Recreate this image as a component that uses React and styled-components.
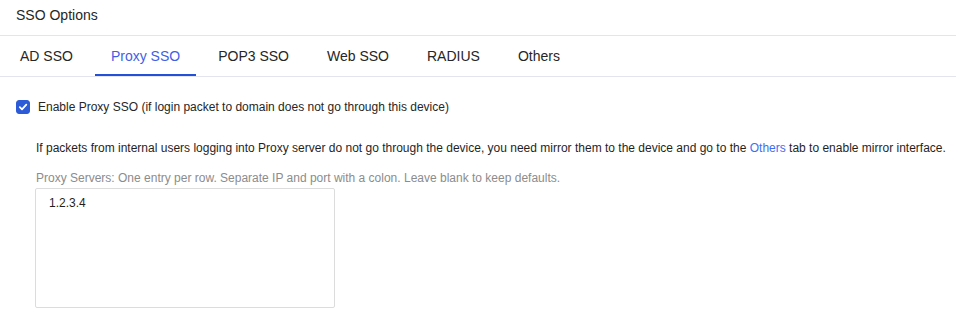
import React, { useState } from "react";
import styled, { createGlobalStyle } from "styled-components";

const GlobalStyle = createGlobalStyle`
    html, body {
        margin: 0;
        padding: 0;
        background: #ffffff;
    }
    body {
        font-family: "Liberation Sans", Arial, sans-serif;
        color: #262626;
    }
`

const Page = styled.div`
    width: 956px;
    height: 318px;
    overflow: hidden;
    background: #fff;
`
const Header = styled.div`
    box-sizing: border-box;
    height: 36px;
    padding: 6px 16px 0;
    font-size: 14px;
    line-height: 18px;
    color: #262626;
    border-bottom: 1px solid #e4e4ee;
`
const TabBar = styled.div`
    display: flex;
    gap: 6px;
    box-sizing: border-box;
    height: 41px;
    padding-left: 4px;
    border-bottom: 1px solid #e4e4ee;
`
const Tab = styled.div`
    position: relative;
    padding: 0 16px;
    font-size: 14px;
    line-height: 40px;
    color: ${props => (props.$active ? "#3f5fe6" : "#262626")};
    cursor: pointer;

    &::after {
        content: "";
        position: absolute;
        left: 0;
        right: 0;
        bottom: 0;
        height: 2px;
        background: ${props => (props.$active ? "#2450d8" : "transparent")};
    }
`
const Content = styled.div`
    padding: 21px 16px 0;
    font-size: 12px;
`
const CheckRow = styled.label`
    display: flex;
    align-items: center;
    gap: 8px;
    height: 18px;
    line-height: 18px;
    cursor: pointer;
`
const Box = styled.span`
    display: flex;
    align-items: center;
    justify-content: center;
    width: 14px;
    height: 14px;
    border-radius: 3px;
    background: ${props => (props.$checked ? "#2d5bd8" : "#fff")};
    border: 1px solid ${props => (props.$checked ? "#2d5bd8" : "#bfbfbf")};
    box-sizing: border-box;
`
const Indent = styled.div`
    padding-left: 20px;
`
const Description = styled.div`
    margin-top: 22px;
    line-height: 20px;
    white-space: nowrap;
    color: #1f1f1f;
`
const Link = styled.a`
    color: #3d6ff0;
    text-decoration: none;
    cursor: pointer;
`
const Hint = styled.div`
    margin-top: 10px;
    line-height: 20px;
    color: #8c8c8c;
    white-space: nowrap;
`
const Servers = styled.textarea`
    display: block;
    box-sizing: border-box;
    width: 300px;
    height: 120px;
    margin: 0 0 0 -1px;
    padding: 5px 13px;
    border: 1px solid #dcdcdc;
    border-radius: 2px;
    font-family: "Liberation Sans", Arial, sans-serif;
    font-size: 12px;
    line-height: 18px;
    color: #1f1f1f;
    resize: none;
    outline: none;
`

const tabs = ["AD SSO", "Proxy SSO", "POP3 SSO", "Web SSO", "RADIUS", "Others"];

const App = () => {
    const [active, setActive] = useState("Proxy SSO");
    const [checked, setChecked] = useState(true);

    return (
        <Page>
            <GlobalStyle />
            <Header>SSO Options</Header>
            <TabBar>
                {tabs.map(t => (
                    <Tab key={t} $active={t === active} onClick={() => setActive(t)}>
                        {t}
                    </Tab>
                ))}
            </TabBar>
            <Content>
                <CheckRow onClick={() => setChecked(!checked)}>
                    <Box $checked={checked}>
                        {checked && (
                            <svg width="10" height="10" viewBox="0 0 10 10">
                                <path d="M1.8 5.2 L4 7.3 L8.3 2.6" fill="none" stroke="#fff" strokeWidth="1.8" strokeLinecap="round" strokeLinejoin="round" />
                            </svg>
                        )}
                    </Box>
                    Enable Proxy SSO (if login packet to domain does not go through this device)
                </CheckRow>
                <Indent>
                    <Description>
                        If packets from internal users logging into Proxy server do not go through the device, you need mirror them to the device and go to the <Link>Others</Link> tab to enable mirror interface.
                    </Description>
                    <Hint>Proxy Servers: One entry per row. Separate IP and port with a colon. Leave blank to keep defaults.</Hint>
                    <Servers defaultValue="1.2.3.4" />
                </Indent>
            </Content>
        </Page>
    );
};

export default App;
